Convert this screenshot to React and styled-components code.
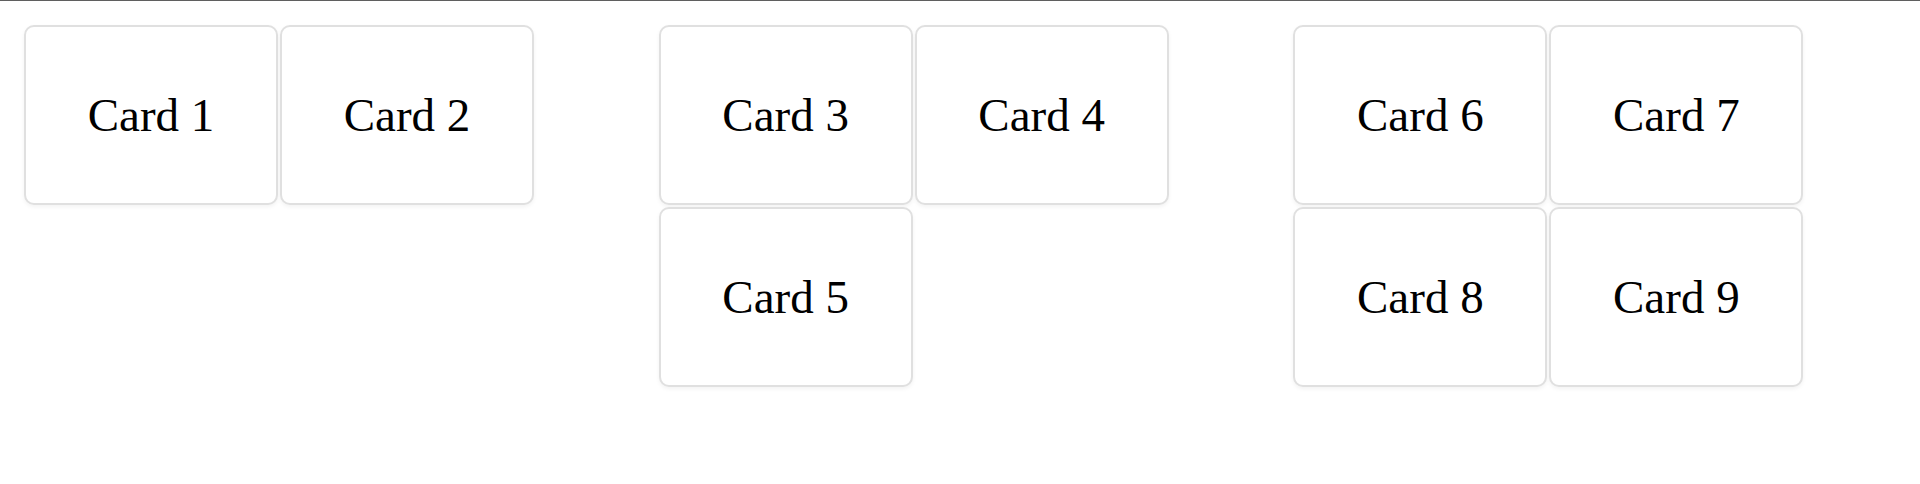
import React from "react";
import styled, { createGlobalStyle } from "styled-components";

const GlobalStyle = createGlobalStyle`
  html, body {
    margin: 0;
    padding: 0;
    background: #ffffff;
    font-family: "Liberation Serif", "Times New Roman", serif;
  }
`;

const Page = styled.div`
  border-top: 1px solid #5f5f5f;
  padding: 24px;
  display: grid;
  grid-template-columns: repeat(3, 1fr);
  column-gap: 32px;
  align-items: start;
`;

const Group = styled.div`
  display: flex;
  flex-wrap: wrap;
  column-gap: 2px;
  row-gap: 2px;
  width: 510px;
`;

const Card = styled.div`
  box-sizing: border-box;
  width: 254px;
  height: 180px;
  border: 2px solid #e0e0e0;
  border-radius: 10px;
  background: #fff;
  box-shadow: 0 2px 4px rgba(0, 0, 0, 0.05);
  display: flex;
  align-items: center;
  justify-content: center;
  font-size: 47px;
  color: #000;
`;

const groups = [
  ["Card 1", "Card 2"],
  ["Card 3", "Card 4", "Card 5"],
  ["Card 6", "Card 7", "Card 8", "Card 9"],
];

export default function App() {
  return (
    <>
      <GlobalStyle />
      <Page>
        {groups.map((cards, i) => (
          <Group key={i}>
            {cards.map((c) => (
              <Card key={c}>{c}</Card>
            ))}
          </Group>
        ))}
      </Page>
    </>
  );
}
